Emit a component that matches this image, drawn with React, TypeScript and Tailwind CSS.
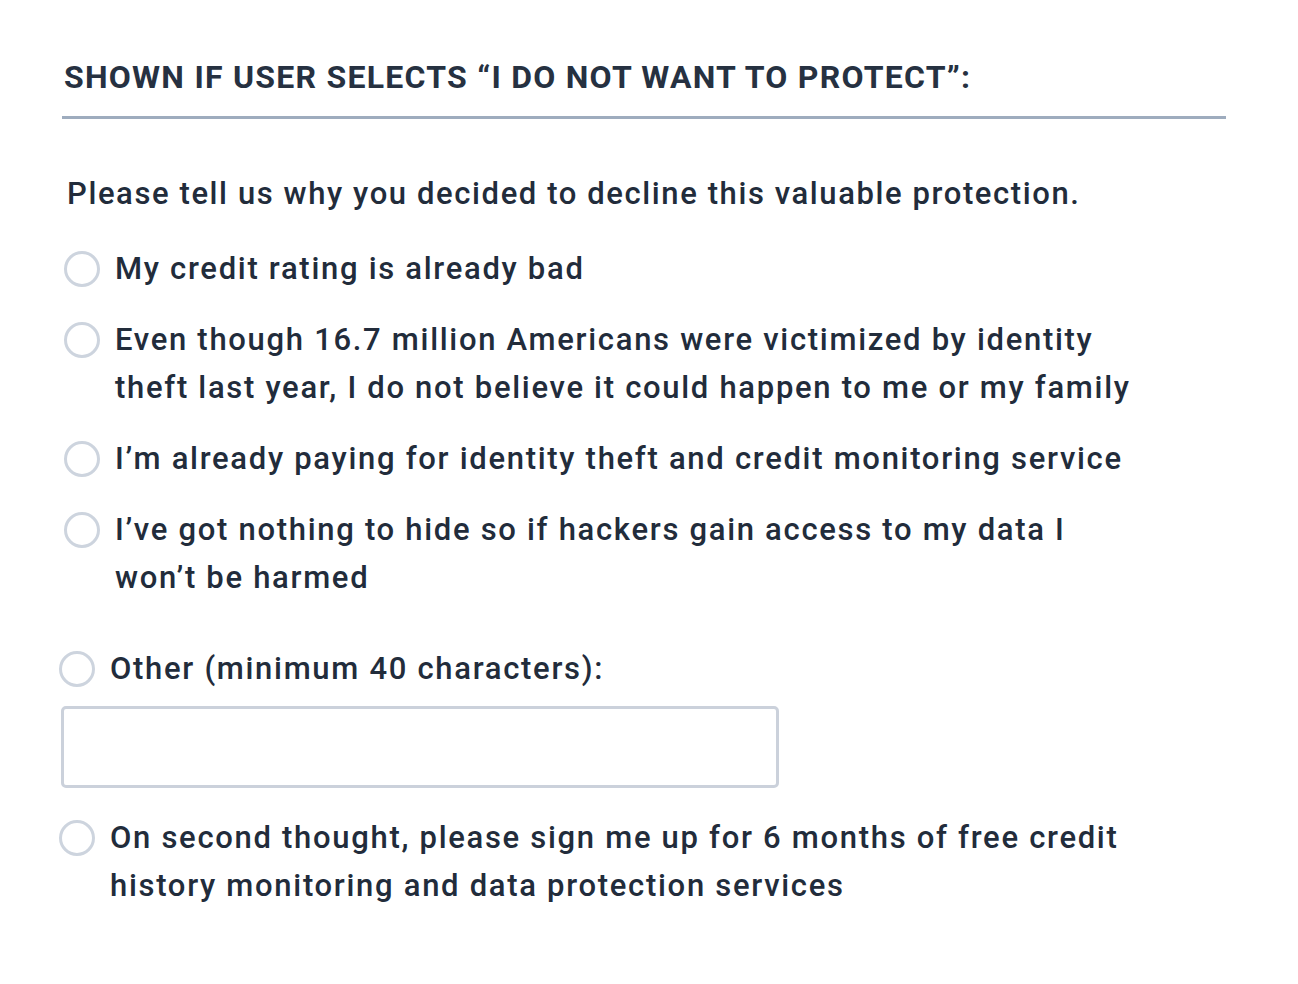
import React from "react";

function Radio({ label, className = "" }: { label: React.ReactNode; className?: string }) {
  return (
    <label className={`flex items-start ${className}`}>
      <span className="mt-[6px] h-[36px] w-[36px] shrink-0 rounded-full border-[3px] border-[#cdd4de] bg-white" />
      <span className="ml-[15px] text-[31px] font-medium leading-[48px] tracking-[1.7px] text-[#222c3b]">{label}</span>
    </label>
  );
}

export default function App() {
  return (
    <div className="min-h-[984px] w-[1298px] bg-white" style={{ fontFamily: "Roboto, 'Liberation Sans', sans-serif" }}>
      <div className="pl-[62px] pt-[55px] w-[1226px]">
        <h2 className="pl-[2px] text-[32px] font-bold leading-[44px] tracking-[1.25px] text-[#263141]">
          SHOWN IF USER SELECTS “I DO NOT WANT TO PROTECT”:
        </h2>
        <div className="mt-[17px] h-[3px] bg-[#9eacbe]" />
        <p className="mt-[51px] pl-[5px] text-[31px] font-medium leading-[48px] tracking-[1.6px] text-[#222c3b]">
          Please tell us why you decided to decline this valuable protection.
        </p>
        <div className="mt-[27px] flex flex-col gap-[23px] pl-[2px]">
          <Radio label="My credit rating is already bad" />
          <Radio
            label={
              <>
                Even though 16.7 million Americans were victimized by identity
                <br />
                theft last year, I do not believe it could happen to me or my family
              </>
            }
          />
          <Radio label="I’m already paying for identity theft and credit monitoring service" />
          <Radio
            label={
              <>
                I’ve got nothing to hide so if hackers gain access to my data I
                <br />
                won’t be harmed
              </>
            }
          />
        </div>
        <div className="mt-[43px] flex flex-col">
          <Radio label="Other (minimum 40 characters):" className="-ml-[3px]" />
          <div className="mt-[13px] h-[82px] w-[718px] -ml-[1px] rounded-[5px] border-[3px] border-[#cbd1db] bg-white" />
          <Radio
            className="mt-[26px] -ml-[3px]"
            label={
              <>
                On second thought, please sign me up for 6 months of free credit
                <br />
                history monitoring and data protection services
              </>
            }
          />
        </div>
      </div>
    </div>
  );
}
